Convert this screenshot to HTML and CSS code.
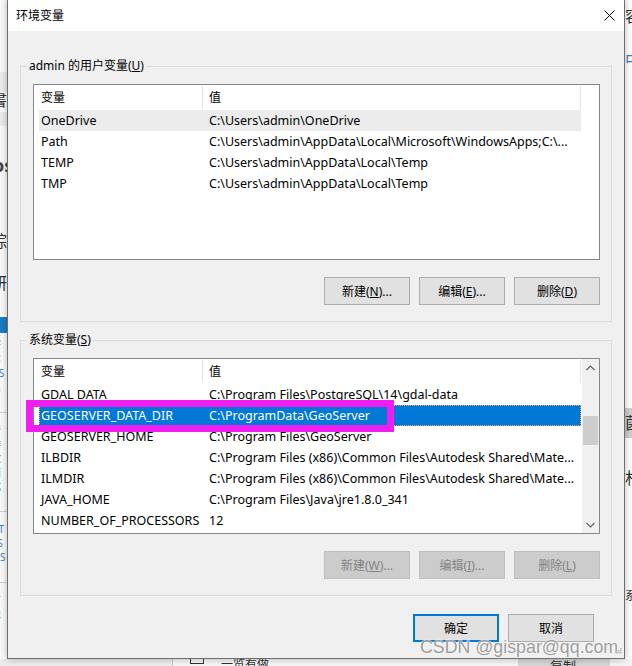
FILE: index.html
```html
<!DOCTYPE html>
<html lang="zh-CN">
<head>
<meta charset="utf-8">
<title>环境变量</title>
<link rel="stylesheet" href="styles.css">
</head>
<body>
<div class="desktop">
  <div class="bg-left">
    <div class="bl s72"></div>
    <div class="bl s20 gray"></div>
    <div class="bl s20 glyph dark">書</div>
    <div class="bl s14 gray"></div>
    <div class="bl s30"></div>
    <div class="bl s20 glyph bold">os</div>
    <div class="bl s57"></div>
    <div class="bl s18 glyph dark">综</div>
    <div class="bl s24"></div>
    <div class="bl s20 glyph dark">研</div>
    <div class="bl s22"></div>
    <div class="bl s16 blueband"></div>
    <div class="bl s19 glyph tiny blue">帳</div>
    <div class="bl s14 glyph tiny red">容</div>
    <div class="bl s14 glyph tiny blue">OS</div>
    <div class="bl s14 glyph tiny blue">系</div>
    <div class="bl s8"></div>
    <div class="bl sline"></div>
    <div class="bl s14 glyph tiny blue">管</div>
    <div class="bl s14 glyph tiny blue">作</div>
    <div class="bl s14 glyph tiny blue">敏</div>
    <div class="bl s14 glyph tiny blue">面</div>
    <div class="bl s14 glyph tiny blue">式</div>
    <div class="bl s8"></div>
    <div class="bl sline"></div>
    <div class="bl s14 glyph tiny blue">HT</div>
    <div class="bl s14 glyph tiny blue">CS</div>
    <div class="bl s14 glyph tiny blue">MS</div>
    <div class="bl s8"></div>
    <div class="bl sline"></div>
    <div class="bl s14 glyph tiny blue">可</div>
    <div class="bl s14 glyph tiny blue">像</div>
  </div>

  <div class="bg-right">
    <div class="br s8"></div>
    <div class="br s18 glyph dark">容</div>
    <div class="br s26"></div>
    <div class="br s16 glyph blue">中</div>
    <div class="br s340"></div>
    <div class="br s30 graybox glyph dark">菌</div>
    <div class="br s32"></div>
    <div class="br s20 glyph dark">杉</div>
    <div class="br s100"></div>
    <div class="br s12 glyph dark small">系</div>
  </div>

  <div class="bg-bottom">
    <div class="bb-a"></div>
    <div class="bb-b"><span class="bb-icon"></span><span class="bb-text">一览有做</span></div>
    <div class="bb-c"><span>复制</span></div>
    <div class="bb-d"></div>
  </div>

  <div class="dialog">
    <div class="titlebar">
      <span class="title">环境变量</span>
      <svg class="close" width="11" height="11" viewBox="0 0 11 11"><path d="M0.5 0.5 L10.5 10.5 M10.5 0.5 L0.5 10.5" stroke="#000" stroke-width="1" fill="none"/></svg>
    </div>
    <div class="body">
      <div class="group">
        <div class="group-label">admin 的用户变量(<u>U</u>)</div>
        <div class="list">
          <div class="list-main">
            <div class="list-head">
              <div class="c1 hc">变量</div>
              <div class="c2 hc">值</div>
            </div>
            <div class="row hover"><div class="c1">OneDrive</div><div class="c2">C:\Users\admin\OneDrive</div></div>
            <div class="row"><div class="c1">Path</div><div class="c2">C:\Users\admin\AppData\Local\Microsoft\WindowsApps;C:\...</div></div>
            <div class="row"><div class="c1">TEMP</div><div class="c2">C:\Users\admin\AppData\Local\Temp</div></div>
            <div class="row"><div class="c1">TMP</div><div class="c2">C:\Users\admin\AppData\Local\Temp</div></div>
          </div>
        </div>
        <div class="buttons">
          <div class="btn">新建(<u>N</u>)...</div>
          <div class="btn">编辑(<u>E</u>)...</div>
          <div class="btn">删除(<u>D</u>)</div>
        </div>
      </div>

      <div class="group second">
        <div class="group-label">系统变量(<u>S</u>)</div>
        <div class="list">
          <div class="list-main">
            <div class="list-head">
              <div class="c1 hc">变量</div>
              <div class="c2 hc">值</div>
            </div>
            <div class="row"><div class="c1">GDAL DATA</div><div class="c2">C:\Program Files\PostgreSQL\14\gdal-data</div></div>
            <div class="row selected"><div class="c1">GEOSERVER_DATA_DIR</div><div class="c2">C:\ProgramData\GeoServer</div></div>
            <div class="row"><div class="c1">GEOSERVER_HOME</div><div class="c2">C:\Program Files\GeoServer</div></div>
            <div class="row"><div class="c1">ILBDIR</div><div class="c2">C:\Program Files (x86)\Common Files\Autodesk Shared\Mate...</div></div>
            <div class="row"><div class="c1">ILMDIR</div><div class="c2">C:\Program Files (x86)\Common Files\Autodesk Shared\Mate...</div></div>
            <div class="row"><div class="c1">JAVA_HOME</div><div class="c2">C:\Program Files\Java\jre1.8.0_341</div></div>
            <div class="row"><div class="c1">NUMBER_OF_PROCESSORS</div><div class="c2">12</div></div>
          </div>
          <div class="scrollbar">
            <div class="arrow"><svg width="9" height="6" viewBox="0 0 9 6"><path d="M0.5 5 L4.5 1 L8.5 5" stroke="#606060" stroke-width="1.2" fill="none"/></svg></div>
            <div class="track"><div class="thumb"></div></div>
            <div class="arrow"><svg width="9" height="6" viewBox="0 0 9 6"><path d="M0.5 1 L4.5 5 L8.5 1" stroke="#606060" stroke-width="1.2" fill="none"/></svg></div>
          </div>
        </div>
        <div class="buttons">
          <div class="btn disabled">新建(<u>W</u>)...</div>
          <div class="btn disabled">编辑(<u>I</u>)...</div>
          <div class="btn disabled">删除(<u>L</u>)</div>
        </div>
      </div>

      <div class="footer">
        <div class="btn default">确定</div>
        <div class="btn">取消</div>
      </div>
    </div>
  </div>

  <div class="annot"></div>
  <div class="watermark">CSDN @gispar@qq.com</div>
  <svg class="grip" width="7" height="7" viewBox="0 0 7 7">
    <rect x="5" y="1" width="1.5" height="1.5" fill="#b8b8b8"/>
    <rect x="3" y="3" width="1.5" height="1.5" fill="#b8b8b8"/>
    <rect x="5" y="3" width="1.5" height="1.5" fill="#b8b8b8"/>
    <rect x="1" y="5" width="1.5" height="1.5" fill="#b8b8b8"/>
    <rect x="3" y="5" width="1.5" height="1.5" fill="#b8b8b8"/>
    <rect x="5" y="5" width="1.5" height="1.5" fill="#b8b8b8"/>
  </svg>
</div>
</body>
</html>
```

FILE: styles.css
```css
* { box-sizing: border-box; }
html, body { margin: 0; padding: 0; }
body {
  width: 632px;
  height: 666px;
  overflow: hidden;
  background: #fff;
  font-family: "Noto Sans", "Noto Sans CJK SC", sans-serif;
  font-size: 12px;
  color: #000;
}
.desktop {
  position: relative;
  width: 632px;
  height: 666px;
  overflow: hidden;
  background: #fff;
}

/* ---------- background fragments (behind the window) ---------- */
.bg-left {
  position: absolute;
  left: 0; top: 0;
  width: 7px; height: 666px;
  display: flex;
  flex-direction: column;
  overflow: hidden;
  background: #fafafa;
}
.bg-right {
  position: absolute;
  left: 625px; top: 0;
  width: 7px; height: 666px;
  display: flex;
  flex-direction: column;
  overflow: hidden;
  background: #fff;
}
.bl, .br { flex: none; overflow: hidden; white-space: nowrap; }
.bl.glyph { text-indent: -9px; }
.br.glyph { text-indent: 0; }
.s8 { height: 8px; } .s12 { height: 12px; } .s14 { height: 14px; } .s16 { height: 16px; }
.s18 { height: 18px; } .s19 { height: 19px; } .s20 { height: 20px; } .s22 { height: 22px; }
.s24 { height: 24px; } .s26 { height: 26px; } .s30 { height: 30px; } .s32 { height: 32px; }
.s57 { height: 57px; } .s72 { height: 72px; } .s100 { height: 100px; } .s340 { height: 340px; }
.sline { height: 11px; border-bottom: 1px solid #d0d0d0; margin-bottom: 10px; }
.gray { background: #ebebeb; }
.glyph { font-size: 16px; line-height: 1; }
.glyph.dark { color: #333; }
.bl.glyph.bold { font-weight: 700; font-size: 18px; color: #444; text-indent: -7px; }
.glyph.blue { color: #3a82c4; }
.glyph.red { color: #d23b3b; }
.glyph.tiny { font-size: 10px; line-height: 14px; }
.glyph.small { font-size: 12px; }
.blueband { background: #1c7cc0; }
.graybox { background: #cfcfcf; line-height: 30px; }

.bg-bottom {
  position: absolute;
  left: 0; top: 659px;
  width: 632px; height: 7px;
  display: flex;
  overflow: hidden;
}
.bb-a { width: 173px; background: #ececec; border-right: 1px solid #c6c6c6; }
.bb-b { width: 345px; background: #f5f5f5; position: relative; }
.bb-icon { position: absolute; left: 17px; top: -3px; width: 14px; height: 8px; border: 1px solid #333; }
.bb-text { position: absolute; left: 48px; top: -1px; font-size: 12px; line-height: 14px; color: #333; }
.bb-c { width: 92px; background: #d6d6d6; position: relative; }
.bb-c span { position: absolute; left: 32px; top: 0; font-size: 13px; line-height: 14px; color: #333; }
.bb-d { flex: 1; background: #f3f3f3; }

/* ---------- dialog window ---------- */
.dialog {
  position: absolute;
  left: 7px; top: -1px;
  width: 618px; height: 660px;
  border: 1px solid #6f6f6f;
  background: #f0f0f0;
  display: flex;
  flex-direction: column;
  box-shadow: 0 0 7px rgba(0, 0, 0, 0.28);
}
.titlebar {
  height: 31px;
  flex: none;
  background: #fff;
  display: flex;
  align-items: center;
  padding-left: 8px;
}
.title { font-size: 12px; line-height: 16px; }
.close { margin-left: auto; margin-right: 9px; }

.body {
  flex: 1;
  background: #f0f0f0;
  padding-top: 35px;
}
.group {
  position: relative;
  margin: 0 12px;
  border: 1px solid #dcdcdc;
  padding: 17px 11px 16px 12px;
}
.group.second { margin-top: 18px; }
.group-label {
  position: absolute;
  left: 6px;
  top: -9px;
  padding: 0 2px;
  line-height: 16px;
  background: #f0f0f0;
  white-space: nowrap;
}
u { text-decoration: underline; text-underline-offset: 1px; }

.list {
  height: 176px;
  border: 1px solid #828790;
  background: #fff;
  display: flex;
}
.list-main {
  flex: 1;
  padding-left: 5px;
  overflow: hidden;
}
.list-head {
  display: flex;
  height: 25px;
  width: 542px;
}
.hc {
  border-right: 1px solid #e5e5e5;
  margin: 1px 0 1px 0;
  line-height: 23px;
}
.c1 {
  width: 164px;
  flex: none;
  padding-left: 2px;
  white-space: nowrap;
  overflow: hidden;
}
.c2 {
  flex: 1;
  padding-left: 6px;
  white-space: nowrap;
  overflow: hidden;
}
.row {
  display: flex;
  width: 542px;
  height: 21px;
  line-height: 21px;
  font-size: 12.5px;
}
.row.hover { background: #ececec; }
.row.selected {
  background: #0078d7;
  color: #fff;
  outline: 1px dotted #f2a65a;
  outline-offset: -1px;
}

.scrollbar {
  width: 17px;
  flex: none;
  background: #f0f0f0;
  display: flex;
  flex-direction: column;
}
.arrow {
  height: 17px;
  display: flex;
  align-items: center;
  justify-content: center;
}
.track { flex: 1; padding-top: 40px; }
.thumb { height: 29px; margin: 0 1px; background: #cdcdcd; }

.buttons {
  display: flex;
  justify-content: flex-end;
  gap: 9px;
  margin-top: 17px;
}
.btn {
  width: 86px;
  height: 28px;
  background: #e1e1e1;
  border: 1px solid #adadad;
  display: flex;
  align-items: center;
  justify-content: center;
  white-space: nowrap;
}
.btn.disabled {
  background: #cccccc;
  border-color: #bfbfbf;
  color: #838383;
}
.btn.default { border: 2px solid #0078d7; }

.footer {
  display: flex;
  justify-content: flex-end;
  gap: 9px;
  margin-top: 18px;
  padding-right: 30px;
}

/* ---------- overlays ---------- */
.annot {
  position: absolute;
  left: 26px; top: 400px;
  width: 368px; height: 32px;
  border: 7px solid #f01ef0;
}
.watermark {
  position: absolute;
  left: 420px; top: 637px;
  font-family: "Liberation Sans", sans-serif;
  font-size: 17.8px;
  line-height: 20px;
  color: #9c9c9c;
  white-space: nowrap;
  text-shadow: 0 0 1px #fff, 0 0 2px #fff;
}
.grip {
  position: absolute;
  left: 615px; top: 647px;
}
```
